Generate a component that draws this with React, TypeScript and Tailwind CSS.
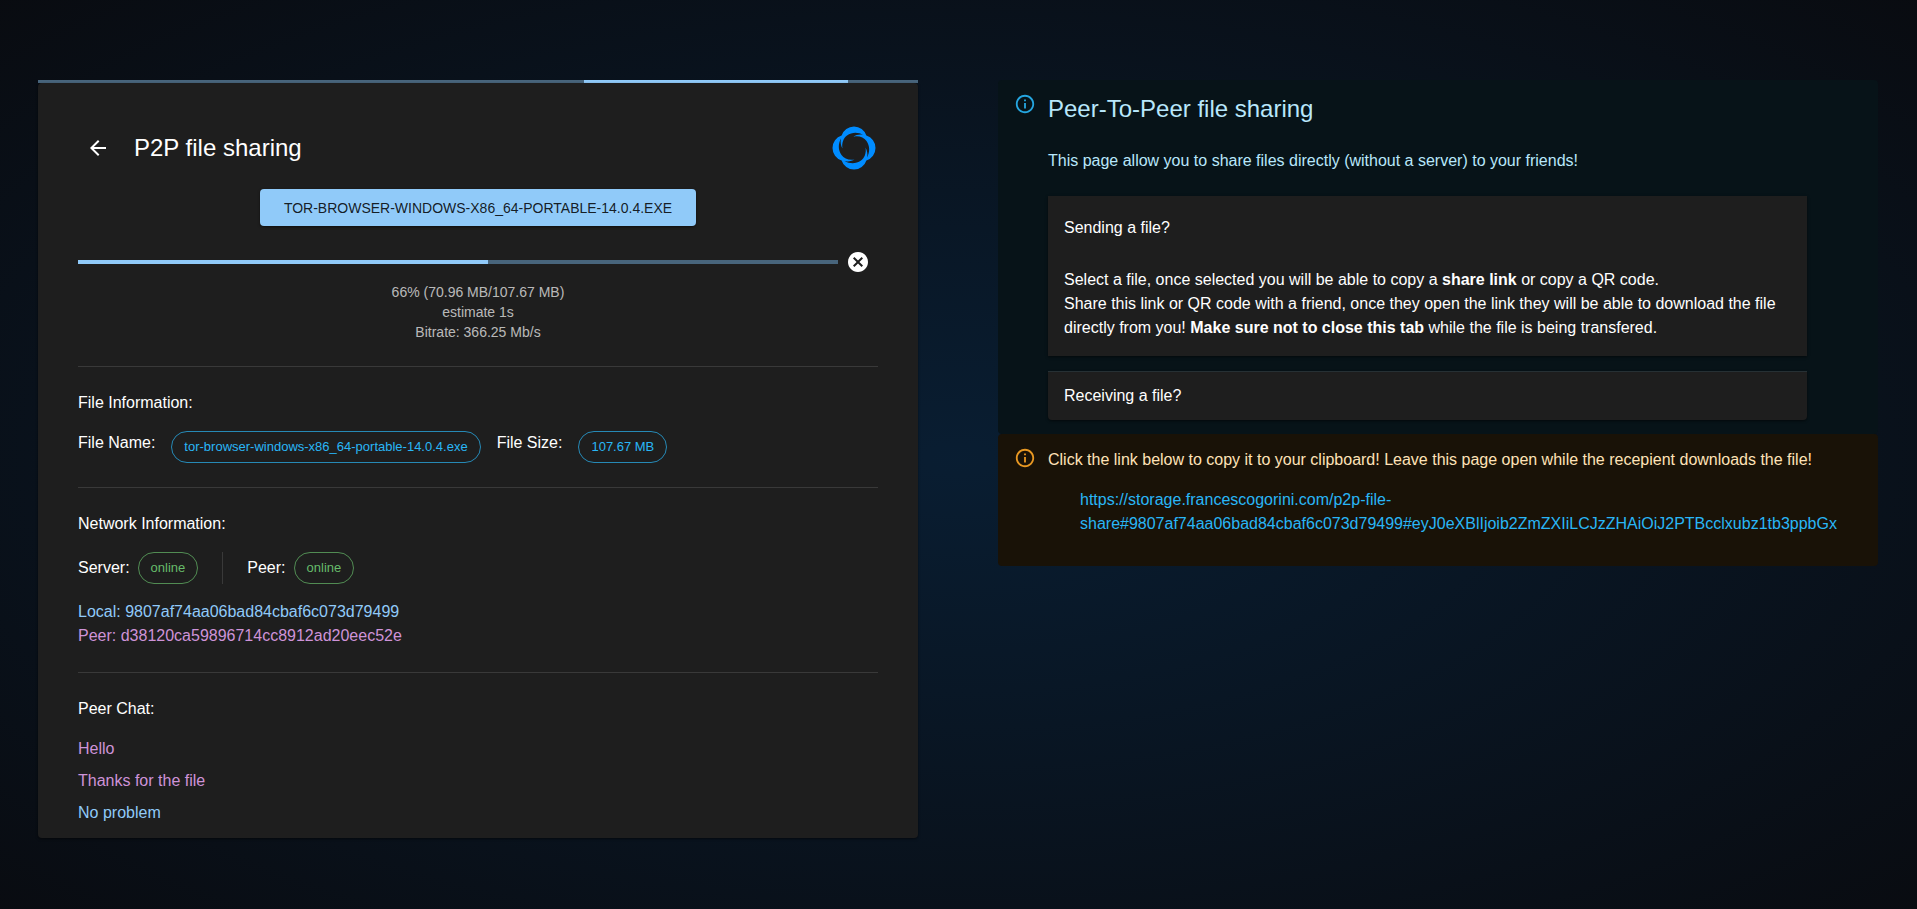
import { useId, type ReactNode } from "react";

const SHARE_LINK =
  "https://storage.francescogorini.com/p2p-file-share#9807af74aa06bad84cbaf6c073d79499#eyJ0eXBlIjoib2ZmZXIiLCJzZHAiOiJ2PTBcclxubz1tb3ppbGx";

const FILE_NAME = "tor-browser-windows-x86_64-portable-14.0.4.exe";

type Message = { from: "peer" | "local"; text: string };

const MESSAGES: Message[] = [
  { from: "peer", text: "Hello" },
  { from: "peer", text: "Thanks for the file" },
  { from: "local", text: "No problem" },
];

function BackIcon() {
  return (
    <svg viewBox="0 0 24 24" className="size-6 fill-current" aria-hidden="true">
      <path d="M20 11H7.83l5.59-5.59L12 4l-8 8 8 8 1.41-1.41L7.83 13H20v-2z" />
    </svg>
  );
}

function CancelIcon() {
  return (
    <svg viewBox="0 0 24 24" className="size-6 fill-current" aria-hidden="true">
      <path d="M12 2C6.47 2 2 6.47 2 12s4.47 10 10 10 10-4.47 10-10S17.53 2 12 2zm5 13.59L15.59 17 12 13.41 8.41 17 7 15.59 10.59 12 7 8.41 8.41 7 12 10.59 15.59 7 17 8.41 13.41 12 17 15.59z" />
    </svg>
  );
}

function InfoIcon() {
  return (
    <svg viewBox="0 0 24 24" className="size-[22px] fill-current" aria-hidden="true">
      <path d="M11 7h2v2h-2V7zm0 4h2v6h-2v-6zm1-9C6.48 2 2 6.48 2 12s4.48 10 10 10 10-4.48 10-10S17.52 2 12 2zm0 18c-4.41 0-8-3.59-8-8s3.59-8 8-8 8 3.59 8 8-3.59 8-8 8z" />
    </svg>
  );
}

function Logo() {
  return (
    <svg viewBox="-24 -24 48 48" className="size-12 shrink-0" role="img" aria-label="Logo">
      <path
        fill="#008cff"
        fillRule="evenodd"
        d="M-12.4-12.4A13 13 0 0 1 12.4-12.4A13 13 0 0 1 12.4 12.4A13 13 0 0 1-12.4 12.4A13 13 0 0 1-12.4-12.4Z
           M.5-11.5C5-12.5 10-10.5 12.5-7C16-2 16 4 13 9.5C14 6 13 2 11.5-.5C12.5 5 10.5 10 7 12.5C2 16-4 16-9.5 13C-6 14-2 13 .5 11.5C-5 12.5-10 10.5-12.5 7C-16 2-16-4-13-9.5C-14-6-13-2-11.5 .5C-12.5-5-10.5-10-7-12.5C-2-16 4-16 9.5-13C6-14 2-13-.5-11.5Z"
      />
    </svg>
  );
}

function Divider() {
  return <hr className="my-6 border-0 border-t border-white/12" />;
}

function Chip({ tone, children }: { tone: "info" | "success"; children: ReactNode }) {
  const colour =
    tone === "info"
      ? "border-[#29b6f6]/70 text-[#29b6f6]"
      : "border-[#66bb6a]/70 text-[#66bb6a]";
  return (
    <span
      className={`inline-flex h-8 items-center rounded-2xl border px-3 text-[13px] whitespace-nowrap ${colour}`}
    >
      {children}
    </span>
  );
}

function Alert({ tone, children }: { tone: "info" | "warning"; children: ReactNode }) {
  const colour = tone === "info" ? "bg-[#071318] text-[#b8e7fb]" : "bg-[#191207] text-[#ffe2b7]";
  const icon = tone === "info" ? "text-[#29b6f6]" : "text-[#ffa726]";
  return (
    <section className={`flex gap-3 rounded px-4 py-[6px] ${colour}`}>
      <div className={`shrink-0 py-[7px] opacity-90 ${icon}`}>
        <InfoIcon />
      </div>
      <div className="min-w-0 flex-1 py-2">{children}</div>
    </section>
  );
}

function TransferCard() {
  const statusId = useId();
  return (
    <section>
      <div role="progressbar" aria-label="Connection activity" className="h-[3px] bg-[#48657c]">
        <div className="ml-[62%] h-full w-[30%] bg-[#90caf9]" />
      </div>
      <div className="rounded bg-[#1e1e1e] px-10 pt-10 pb-[13px] shadow-sm shadow-black/40">
        <header className="flex h-[50px] items-center gap-4">
          <button type="button" aria-label="Back" className="rounded-full p-2">
            <BackIcon />
          </button>
          <h1 className="flex-1 text-2xl">P2P file sharing</h1>
          <Logo />
        </header>

        <div className="mt-4 flex justify-center">
          <button
            type="button"
            className="h-[37px] rounded bg-[#90caf9] px-6 text-sm text-black/87 uppercase shadow-sm shadow-black/40"
          >
            {FILE_NAME}
          </button>
        </div>

        <div className="mt-4 flex items-center">
          <div
            role="progressbar"
            aria-labelledby={statusId}
            aria-valuenow={66}
            className="h-1 flex-1 bg-[#48657c]"
          >
            <div className="h-full w-[54%] bg-[#90caf9]" />
          </div>
          <button type="button" aria-label="Cancel transfer" className="rounded-full p-2">
            <CancelIcon />
          </button>
        </div>

        <div id={statusId} className="text-center text-sm text-white/70">
          <p>66% (70.96 MB/107.67 MB)</p>
          <p>estimate 1s</p>
          <p>Bitrate: 366.25 Mb/s</p>
        </div>

        <Divider />

        <h2>File Information:</h2>
        <div className="mt-4 flex flex-wrap items-start gap-4">
          <span>File Name:</span>
          <Chip tone="info">{FILE_NAME}</Chip>
          <span>File Size:</span>
          <Chip tone="info">107.67 MB</Chip>
        </div>

        <Divider />

        <h2>Network Information:</h2>
        <div className="mt-4 flex gap-6">
          <div className="flex items-center gap-2">
            <span>Server:</span>
            <Chip tone="success">online</Chip>
          </div>
          <div className="w-px bg-white/12" />
          <div className="flex items-center gap-2">
            <span>Peer:</span>
            <Chip tone="success">online</Chip>
          </div>
        </div>
        <p className="mt-4 text-[#90caf9]">Local: 9807af74aa06bad84cbaf6c073d79499</p>
        <p className="text-[#ce93d8]">Peer: d38120ca59896714cc8912ad20eec52e</p>

        <Divider />

        <h2>Peer Chat:</h2>
        <ul className="mt-4 flex flex-col gap-2">
          {MESSAGES.map((message) => (
            <li
              key={message.text}
              className={message.from === "peer" ? "text-[#ce93d8]" : "text-[#90caf9]"}
            >
              {message.text}
            </li>
          ))}
        </ul>
      </div>
    </section>
  );
}

function HelpPanel() {
  return (
    <div>
      <Alert tone="info">
        <h2 className="-mt-px text-2xl">Peer-To-Peer file sharing</h2>
        <p className="mt-6 mb-[23px]">
          This page allow you to share files directly (without a server) to your friends!
        </p>
        <div className="mr-[55px] text-white">
          <div className="bg-[#1e1e1e] px-4 pb-4 shadow-sm shadow-black/40">
            <button type="button" aria-expanded="true" className="block w-full py-5 text-left">
              Sending a file?
            </button>
            <p className="pt-2">
              Select a file, once selected you will be able to copy a <b>share link</b> or copy a QR
              code.
            </p>
            <p>
              Share this link or QR code with a friend, once they open the link they will be able to
              download the file directly from you! <b>Make sure not to close this tab</b> while the
              file is being transfered.
            </p>
          </div>
          <div className="mt-[15px] rounded-b border-t border-[#263034] bg-[#1e1e1e] px-4 shadow-sm shadow-black/40">
            <button type="button" aria-expanded="false" className="block w-full py-3 text-left">
              Receiving a file?
            </button>
          </div>
        </div>
      </Alert>
      <Alert tone="warning">
        <p>
          Click the link below to copy it to your clipboard! Leave this page open while the
          recepient downloads the file!
        </p>
        <div className="my-4 mr-4 ml-8 overflow-hidden text-[#29b6f6]">
          <a href={SHARE_LINK}>{SHARE_LINK}</a>
        </div>
      </Alert>
    </div>
  );
}

export default function App() {
  return (
    <main className="min-h-screen bg-[#121212] font-['Liberation_Sans',Arial,sans-serif] text-base text-white">
      <div className="grid min-h-screen grid-cols-1 items-start gap-20 bg-[radial-gradient(ellipse_at_50%_50%,hsla(210,100%,16%,0.5),hsl(220,30%,5%))] py-20 pr-[39px] pl-[38px] lg:grid-cols-2">
        <TransferCard />
        <HelpPanel />
      </div>
    </main>
  );
}
